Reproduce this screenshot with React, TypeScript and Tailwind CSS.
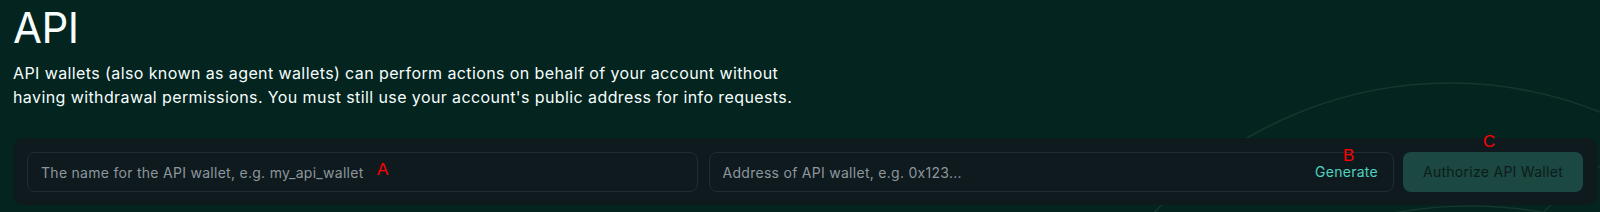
export default function App() {
  return (
    <div className="relative h-[212px] w-[1600px] overflow-hidden bg-[#04241f] font-['Inter',sans-serif] text-[#f6fefd]">
      <svg
        className="pointer-events-none absolute inset-0"
        width="1600"
        height="212"
        viewBox="0 0 1600 212"
        fill="none"
      >
        <circle cx="1450" cy="485" r="402" stroke="#15372f" strokeWidth="1.5" />
        <circle cx="1470" cy="620" r="414" stroke="#15372f" strokeWidth="1.5" />
        <circle cx="1760" cy="420" r="300" stroke="#123229" strokeWidth="1.5" />
      </svg>

      <div className="relative pl-[13px] pr-[3px] pt-1">
        <h1 className="text-[42px] font-normal leading-[48px] tracking-[-0.5px]">API</h1>
        <p className="mt-[9px] max-w-[800px] text-base leading-6 tracking-[0.4px]">
          API wallets (also known as agent wallets) can perform actions on behalf of your account
          without having withdrawal permissions. You must still use your account's public address
          for info requests.
        </p>

        <div className="mt-[29px] flex items-center gap-[11px] rounded-[10px] bg-[#0f1a1f] px-[14px] pt-[14px] pb-[13px] text-sm tracking-[0.28px]">
          <input
            className="h-10 flex-1 rounded-lg border border-[#212c33] bg-transparent pl-[13px] text-white outline-none placeholder:text-[#8c969c]"
            placeholder="The name for the API wallet, e.g. my_api_wallet"
          />
          <div className="flex h-10 flex-1 items-center rounded-lg border border-[#212c33] pl-[13px] pr-[15px]">
            <input
              className="h-full flex-1 bg-transparent text-white outline-none placeholder:text-[#8c969c]"
              placeholder="Address of API wallet, e.g. 0x123..."
            />
            <button className="text-[#50d2c1]">Generate</button>
          </div>
          <button className="ml-[-2px] h-10 w-[180px] rounded-lg bg-[#1b4840] text-[#0c1b1d]">
            Authorize API Wallet
          </button>
        </div>
      </div>

      <span className="absolute left-[377px] top-[161px] font-['Liberation_Sans',sans-serif] text-[17px] leading-none text-[#ff0000]">
        A
      </span>
      <span className="absolute left-[1343px] top-[147px] font-['Liberation_Sans',sans-serif] text-[17px] leading-none text-[#ff0000]">
        B
      </span>
      <span className="absolute left-[1483px] top-[133px] font-['Liberation_Sans',sans-serif] text-[17px] leading-none text-[#ff0000]">
        C
      </span>
    </div>
  );
}
